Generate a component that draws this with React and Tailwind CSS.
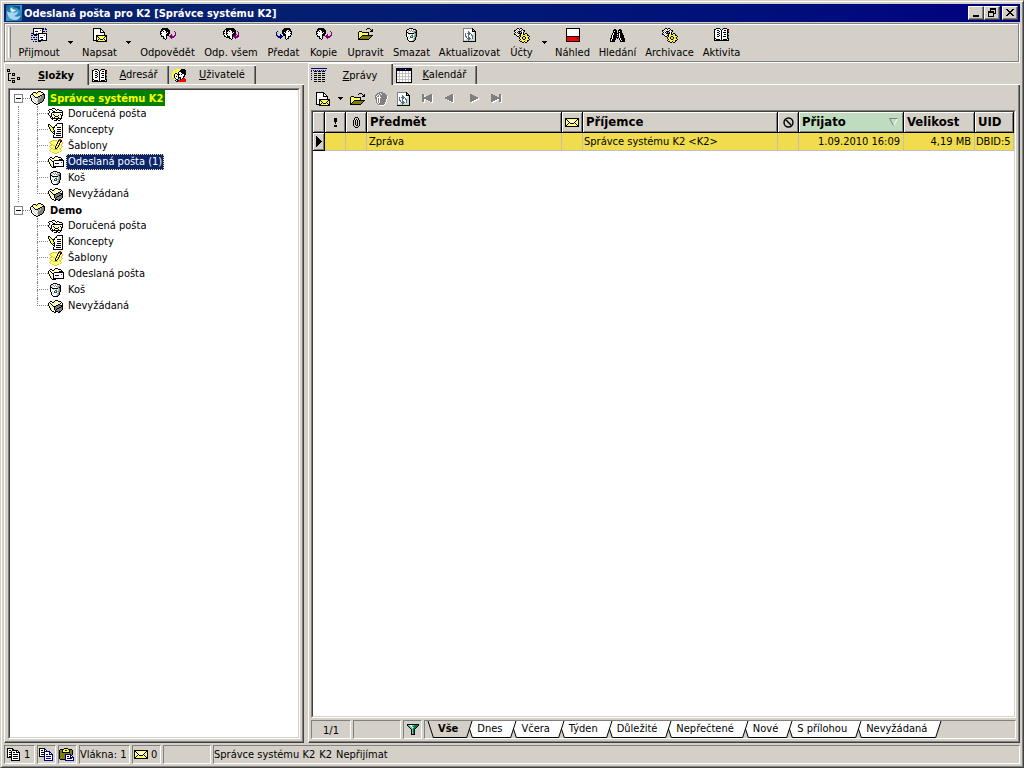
import { useState } from "react";

const palette = {
    K: "#000000",
    W: "#ffffff",
    Y: "#ffff30",
    o: "#dcc83c",
    y: "#808000",
    L: "#ffff7a",
    G: "#808080",
    g: "#c0c0c0",
    B: "#000080",
    P: "#800080",
    R: "#ff0000",
    E: "#008040",
    T: "#5fc4c4",
    A: "#5a6e8c",
    c: "#c4dcc8",
};

// 16x16 toolbar bitmaps, one character per pixel
const icons = {
    receive: [
        "..KKKKKKKKKKB.B.",
        "..KWWWWWWWWKB.BB",
        "..KWWWWWWRWK....",
        "..KWBBBWWWWKBB.B",
        "..KWWWWWWWWK....",
        "BBKWWBWKKKKKKKKK",
        "..KKKKKKWWWWWWWK",
        "BB.BBB.KWWWWWRWK",
        ".......KWWWWWWWK",
        "B.BB.B.KWBBBWWWK",
        ".......KWWWWWWWK",
        "BB.BBB.KWWBBWWWK",
        ".......KKKKKKKKK",
        "..B.BB.BBB......",
    ],
    compose: [
        ".KKKKKKKK.......",
        ".KWWWWWWKK......",
        ".KWWWWWWKWK.....",
        ".KWWWWWWKWWK....",
        ".KWWWWWWKKKKK...",
        ".KWWWWWWWWWWK...",
        ".KWWWWWWWWWWK...",
        ".KWWKKKKKKKKKKK.",
        ".KWWKKYLYLYLYKK.",
        ".KWWKYKYLYLYKYK.",
        ".KWWKLYKYLYKYLK.",
        ".KWWKYKYKKKYKYK.",
        ".KKKKKYLYLYLYKK.",
        "....KKKKKKKKKKK.",
    ],
    reply: [
        "..KKKKKK........",
        ".KKKKKKKK.......",
        ".KKWWKKKKK......",
        "KKWKWWKKKK....P.",
        "KWWWWWKWKK.....P",
        "KKWWWWWKKK.....P",
        "KWWWWWKKK..P...P",
        ".KWWWWKKK.PP..PP",
        ".KKKWWK..PPPPPP.",
        "...KWWK...PPPP..",
        "...KKWK....P....",
        ".....K..........",
    ],
    replyAll: [
        "...KKKKKKKK.....",
        "..KKKKKKKKKK....",
        ".KWKKKWWKKKKK...",
        "KKWKKWKWWKKKK.P.",
        "KWWKWWWWWKWKK..P",
        "KKWKKWWWWWKKK..P",
        "KWWKWWWWWKKKPP.P",
        ".KWWKWWWWKKPP.PP",
        ".KKWKKKWWKPPPPPP",
        "...KKKKWWK.PPPP.",
        "......KKWK..P...",
        "........K.......",
    ],
    forward: [
        "........KKKKKK..",
        ".......KKKKKKKK.",
        "......KKKKKWWKK.",
        ".N....KKKKWWKWKK",
        "N.....KKWKWWWWWK",
        "N.....KKKWWWWWKK",
        "N...N..KKKWWWWWK",
        "NN..NN.KKKWWWWK.",
        ".NNNNNN..KWWKKK.",
        "..NNNN...KWWK...",
        "....N....KWKK...",
        "..........K.....",
    ],
    open: [
        ".........KKK....",
        "........K...K.K.",
        ".............KK.",
        ".KKK........KKK.",
        "KYLYKKKKKKK.....",
        "KLYLYLYLYLK.....",
        "KYLYLYLYLYK.....",
        "KLYLKKKKKKKKKKK.",
        "KYLKyyyyyyyyyK..",
        "KLKyyyyyyyyyK...",
        "KKyyyyyyyyyK....",
        "KKKKKKKKKKK.....",
    ],
    trash: [
        ".....KKKK.......",
        "...KKWWgWKKK....",
        "..KgWGWGWgWGK...",
        "..KWgWGWGgGGK...",
        "..KKgWWWWgGKK...",
        "..KWKKKKKKgGK...",
        "..KWWgWWgWgGK...",
        "..KWWWWEEWgGK...",
        "..KWgWEWEgGGK...",
        "...KWWEEEWgK....",
        "...KWgWWWgGK....",
        "...KWWWWWgGK....",
        "....KWWWgGK.....",
        ".....KKKKK......",
    ],
    trashOff: [
        "......GGGG......",
        "....GGGWGGGG....",
        "...GGWGGWGGGG...",
        "..GGWGWGGGGGGG..",
        "..GWGGWGGGGGGGW.",
        "..GGWWWWGGGGGGW.",
        "..GGWGWGGGGGGGW.",
        "...GWGWGGGGGGW..",
        "...GWGWGGGGGGW..",
        "...GWGWGGGGGGW..",
        "...GWGWGGGGGW...",
        "....GWGGGGGGW...",
        ".....GGGGGGW....",
        "......WWWWW.....",
    ],
    refresh: [
        ".GGGGGGGGGK.....",
        ".GWWWWWWWWKK....",
        ".GWWWWWWWWKgK...",
        ".GWWWWAWWWKKKK..",
        ".GWWWWAAWWWWcK..",
        ".GWAWAAAAWWccK..",
        ".GWAWWAAWAWccK..",
        ".GWAWWAWWAAccK..",
        ".GWAAWAWWWAccK..",
        ".GWWAWAAWWAccK..",
        ".GWWWAAAAWAccK..",
        ".GWWccAAcccccK..",
        ".GccccAccccccK..",
        ".KKKKKKKKKKKKK..",
    ],
    gears: [
        "...KK.KK........",
        "..KWWKWWK.......",
        "KKWgWgWKWKK.....",
        "KWgWKKKgWgK.....",
        ".KWKgKgKWK......",
        "KWgWKKKKWK.KK...",
        "KKWgWgKYYKKYYK..",
        "..KWWKKYoYYoYKK.",
        "...KK.KYYKKYYYYK",
        ".....KYoK..KYoK.",
        ".....KYYK..KYYK.",
        "......KYYKKYYYYK",
        ".....KYoYYYoYKK.",
        "......KKYYKYYK..",
        "........KK.KK...",
    ],
    preview: [
        ".KKKKKKKKKKKKKK.",
        ".KWWWWWWWWWWWWK.",
        ".KWWWWWWWWWWWWK.",
        ".KWWWWWWWWWWWWK.",
        ".KWWWWWWWWWWWWK.",
        ".KWWWWWWWWWWWWK.",
        ".KWWWWWWWWWWWWK.",
        ".KWWWWWWWWWWWWK.",
        ".KKKKKKKKKKKKKK.",
        ".KRRRRRRRRRRRRK.",
        ".KRRRRRRRRRRKRK.",
        ".KRRRRRRRRRRRRK.",
        ".KRRRRRRRRRRRRK.",
        ".KKKKKKKKKKKKKK.",
    ],
    search: [
        "................",
        "....KK...KK.....",
        "...KKKK.KKKK....",
        "...KWKK.KWKK....",
        "...KKKK.KKKK....",
        "..KWKKKKKWKKK...",
        "..KWKKKWKWKKK...",
        ".KWKKKKKKWKKKK..",
        ".KWKKKKWKWKKKK..",
        ".KWKKKKKKWKKKK..",
        "KKWKKK.K.KWKKKK.",
        "KWKKKK...KWKKKK.",
        "KWKKK.....KWKKK.",
        "KKKKK.....KKKKK.",
    ],
    book: [
        "..KKKK...KKKK...",
        "KKWWWWK.KWWWWKK.",
        "KWWKKWWKWWKKWKR.",
        "KWWWWKWKWWWWWKR.",
        "KWWKKWWKWKKKWKK.",
        "KWWWWKWKWWWWWKT.",
        "KWWKKWWKWWKKWKT.",
        "KWWWWKWKWWWWWKK.",
        "KWWKKWWKWKKKWKG.",
        "KWWWWWWKWWWWWKG.",
        "KKWWWWWKWWWWWKK.",
        "KWKKKKWKWKKKKWK.",
        "KKKKKKKKKKKKKKK.",
    ],
    tree: [
        "KKK.............",
        "K.K.............",
        "KKK.............",
        "................",
        ".KKK.KKK........",
        ".K...K.K........",
        ".K...KKK........",
        ".K..............",
        ".K........KKK...",
        ".K..KKKK..K.K...",
        ".K........KKK...",
        ".KKK.KKK........",
        ".....K.K........",
        ".....KKK........",
    ],
    users: [
        "....YYYY.KKKK...",
        "..YYYYYYKKKKKK..",
        ".YYoYYYKKKKKKK..",
        ".YYYYYKWWKKKKK..",
        "YYYKKYKWWWKKKK..",
        "YYKWWKKKWKWWKK..",
        "YoKWWWKWWWWWK...",
        "YYKWKWKWWWWKK...",
        ".YKWWWKKKWWK....",
        ".oYKWWKTKWKRR...",
        "..YYKKTTKRRRRR..",
        "...KWKKRRRRRRR..",
        "....KKRRRRRRRR..",
    ],
    list: [
        "BBBBBBBBBBBBBBBB",
        "................",
        "B.B.B.B.B.B.B.B.",
        "B..KKK.KKK.KKK..",
        "................",
        "B..KKK.KKK.KKK..",
        "................",
        "B..KKK.KKK.KKK..",
        "................",
        "B..KKK.KKK.KKK..",
        "................",
        "B..KKK.KKK.KKK..",
        "................",
        "...KKK.KKK.KKK..",
        "................",
        "................",
    ],
    calendar: [
        "KKKKKKKKKKKKKKKK",
        "KBBBBBBBBgBBBBBK",
        "KKKKKKKKKKKKKKKK",
        "KWWgWWgWWgWWgWWK",
        "KWWgWWgWWgWWgWWK",
        "KggggggggggggggK",
        "KWWgWWgWWgWWgWWK",
        "KWWgWWgWWgWWgWWK",
        "KggggggggggggggK",
        "KWWgWWgWWgWWgWWK",
        "KWWgWWgWWgWWgWWK",
        "KggggggggggggggK",
        "KWWgWWgWWgWWgWWK",
        "KWWgWWgWWgWWgWWK",
        "KKKKKKKKKKKKKKKK",
    ],
    mailbox: [
        "........KKK.....",
        "...KKK.KLLLKK...",
        "..KLLLKLLWLLLK..",
        ".KKLWLLLWLWLKKK.",
        "KWWKLLWLWLKKgGK.",
        "KWgWKWLLKKgGGGK.",
        "KWWgWKKKgGgGGGK.",
        ".KWWgWWgGgGGGGK.",
        ".KWgWWgWGGGGGK..",
        ".KWWgWWgGGGGGK..",
        "..KWWgWgGGGGK...",
        "...KWWgWGGKK....",
        "....KKWgKK......",
        "......KK........",
    ],
    inbox: [
        "....KKK.........",
        ".KKKWWWK.KK.....",
        "K.WWKWWWKWWKKK..",
        ".KWWWKKWWWWWWWK.",
        ".KWWKKKKKKKKKKK.",
        "KWWKWWWWWWWWWWK.",
        "K.WKWKWLLLLWKWK.",
        ".KWKWWKLLLKWWKK.",
        "..KKWLWKKKWLWK..",
        "..KWKLKWWWKLWK..",
        "...KKKKKKKKKKK..",
        "....KWWWKKWWK...",
        "......KKK.KK....",
    ],
    drafts: [
        ".........KKKKKK.",
        "KK......KWWWWWK.",
        "KYK....KKWWWWWK.",
        "KYYK..KWWWWWWWK.",
        ".KYYKKKWWKKKKWK.",
        ".KYYYKWWWWWWWWK.",
        "..KYYKWWWKKKKWK.",
        "..KYYYKWWWWWWWK.",
        "...KYKKWWKKKKWK.",
        "....KWKWWWWWWWK.",
        ".....KKWKKKKKWK.",
        "......KWWWWWWWK.",
        ".....KWWKKKKKWK.",
        ".....KWWWWWWWWK.",
        ".....KKKKKKKKKK.",
    ],
    templates: [
        "...........RR...",
        "....ooooo.KRRK..",
        "..ooLLLLLoKYKK..",
        ".oLLLLLLLKYYKLo.",
        "..oLLLLLLKYKLLo.",
        "...ooLLLKYYKLo..",
        "..ooLooLKYKoLo..",
        ".oLLLLLKYYKLLLo.",
        "..oLLLLKYKLLLo..",
        "...ooLLKKLLoo...",
        "..oLLoooooLLo...",
        ".oLLLLLLLLLLLo..",
        "..oLLLLLLLLLo...",
        "....ooLLLoo.....",
        "......ooo.......",
    ],
    sent: [
        ".......KKK......",
        "..KK..KWLWKKK...",
        ".KWLKKWLWLWWWK..",
        "K.KWLWLWLWWKKKK.",
        "KLWKLWKKKKKKKKKK",
        "KWLWKKWWWWWWWWWK",
        ".KWLWKWWWWWWWRWK",
        ".KLWLKWBBBBWWWWK",
        "..KWLKWWWWWWWWWK",
        "..KLWKWWWWWWWWWK",
        "...KWKKKKKKKKKKK",
        "....KKKK........",
    ],
    spam: [
        ".......KKK......",
        "..KK..KWLWKKK...",
        ".KWLKKWLWLWLWK..",
        "K.KWLWLWLWLWKWK.",
        "KLWKLWLWLWKKLWK.",
        "KWLWKLWLKKGGKKK.",
        ".KWLWKKKGGGGGKK.",
        ".KLWLWKGGGGKKGK.",
        "..KWLWKGGKKGGGK.",
        "..KLWLKGKGGGGGK.",
        "...KWLWKGGGGGK..",
        "....KKWKKKGKK...",
        "......KK..KK....",
    ],
    envelope: [
        "KKKKKKKKKKKKKK",
        "KKLLLLLLLLLLKK",
        "KLKWLWLWLWLKLK",
        "KLLKWLWLWLKLLK",
        "KLLWKWLWLKWLLK",
        "KLLKLKKKKLKLLK",
        "KLKLLLLLLLLKLK",
        "KKLLLLLLLLLLKK",
        "KKKKKKKKKKKKKK",
    ],
    clip: [
        "...KKK..",
        "..K...K.",
        "..K.K.K.",
        ".K.K.K.K",
        ".K.K.K.K",
        ".K.K.K.K",
        ".K.K.K.K",
        ".K.K.K.K",
        ".K..KK.K",
        "..K...K.",
        "...KKK..",
    ],
    pages: [
        "KKKKKK..........",
        "KWWWWKK.........",
        "KWKKWKKKKKK.....",
        "KWWWKWWWWKWK....",
        "KWKKKWKKWKKKK...",
        "KWWWKWWWWWWWK...",
        "KWKKKWKKKKKWK...",
        "KWWWKWWWWWWWK...",
        "KWKKKWKKKKKWK...",
        "KKKKKWWWWWWWK...",
        "....KWKKKKKWK...",
        "....KWWWWWWWK...",
        "....KKKKKKKKK...",
    ],
    copy: [
        "KKKKKK..........",
        "KWWWWKK.........",
        "KWKKWKWK........",
        "KWWWWBBBBBB.....",
        "KWKKKBWWWWBB....",
        "KWWWWBWWWWBWB...",
        "KWKKKBWBBWBBBB..",
        "KWWWWBWWWWWWWB..",
        "KKKKKBWBBBBBWB..",
        ".....BWWWWWWWB..",
        ".....BWBBBBBWB..",
        ".....BWWWWWWWB..",
        ".....BBBBBBBBB..",
    ],
    paste: [
        ".....KKKK.......",
        ".KKKKYYYYKKKK...",
        "KyyKYYKKYYKyyK..",
        "KyyKLLLLLLKyyK..",
        "KyyKKKKKKKKyyK..",
        "KyyyyyyyyyyyyK..",
        "KyyyyyBBBBBByK..",
        "KyyyyyBWWWWBB...",
        "KyyyyyBWBBWBWB..",
        "KyyyyyBWWWWBBBB.",
        "KyyyyyBWBBBBBWB.",
        ".KKKKKBWWWWWWWB.",
        "......BBBBBBBBB.",
    ],
    filter: [
        "KKKKKKKKKKKK",
        "KTTWWTTEEEEK",
        ".KTTWTEEEEK.",
        "..KTTWTEEK..",
        "...KTTEEK...",
        "....KTEK....",
        "....KTEK....",
        "....KTEK....",
        "....KTEK....",
        "....KTEK....",
        "....KKKK....",
    ],
};

function Icon({ name, className = "" }) {
    const rows = icons[name];
    const width = rows[0].length;
    const colors = { ...palette, N: "#000080" };

    return (
        <svg
            width={width}
            height={rows.length}
            viewBox={`0 0 ${width} ${rows.length}`}
            shapeRendering="crispEdges"
            className={`shrink-0 ${className}`}
            aria-hidden="true"
        >
            {rows.map((row, y) =>
                [...row].map((c, x) =>
                    colors[c] ? (
                        <rect
                            key={`${x}-${y}`}
                            x={x}
                            y={y}
                            width="1"
                            height="1"
                            fill={colors[c]}
                        />
                    ) : null
                )
            )}
        </svg>
    );
}

function DropArrow() {
    return (
        <svg width="5" height="3" viewBox="0 0 5 3" shapeRendering="crispEdges" aria-hidden="true">
            <path d="M0 0h5v1H0zM1 1h3v1H1zM2 2h1v1H2z" />
        </svg>
    );
}

function Logo() {
    return (
        <svg width="16" height="16" viewBox="0 0 16 16" className="shrink-0" aria-hidden="true">
            <defs>
                <linearGradient id="logo" x1="0" y1="0" x2="1" y2="1">
                    <stop offset="0" stopColor="#0a5c96" />
                    <stop offset="0.5" stopColor="#3c9ccc" />
                    <stop offset="1" stopColor="#0f5f9a" />
                </linearGradient>
            </defs>
            <rect width="16" height="16" fill="url(#logo)" />
            <path d="M1 6c0 5 3 9 8 9 3 0 5-2 6-5-2 2-5 2-7 1 3-1 4-3 4-5-2 2-4 2-6 1C3 8 2 7 1 6z" fill="#a9d6ee" />
            <path d="M5 2c-1 2-1 4 1 5 2 0 3-1 4-2-2 0-4-1-5-3z" fill="#e8f6fd" />
            <path d="M7 1h7v4c-1 0-2-1-3-2-1 0-3-1-4-2z" fill="#0b4f86" />
        </svg>
    );
}

const toolbar = [
    { label: "Přijmout", icon: "receive", width: "w-[50px]", menu: true },
    { label: "Napsat", icon: "compose", width: "w-[45px]", menu: true },
    { label: "Odpovědět", icon: "reply", width: "w-[65px]" },
    { label: "Odp. všem", icon: "replyAll", width: "w-[62px]" },
    { label: "Předat", icon: "forward", width: "w-[43px]" },
    { label: "Kopie", icon: "reply", width: "w-[37px]" },
    { label: "Upravit", icon: "open", width: "w-[47px]" },
    { label: "Smazat", icon: "trash", width: "w-[45px]" },
    { label: "Aktualizovat", icon: "refresh", width: "w-[71px]" },
    { label: "Účty", icon: "gears", width: "w-[33px]", menu: true },
    { label: "Náhled", icon: "preview", width: "w-[43px]" },
    { label: "Hledání", icon: "search", width: "w-[47px]" },
    { label: "Archivace", icon: "gears", width: "w-[57px]" },
    { label: "Aktivita", icon: "book", width: "w-[47px]" },
];

const folders = [
    { label: "Doručená pošta", icon: "inbox" },
    { label: "Koncepty", icon: "drafts" },
    { label: "Šablony", icon: "templates" },
    { label: "Odeslaná pošta", icon: "sent", unread: 1 },
    { label: "Koš", icon: "trash" },
    { label: "Nevyžádaná", icon: "spam" },
];

const filters = [
    "Vše",
    "Dnes",
    "Včera",
    "Týden",
    "Důležité",
    "Nepřečtené",
    "Nové",
    "S přílohou",
    "Nevyžádaná",
];

function TitleBar() {
    const button =
        "flex h-[14px] w-4 items-center justify-center border border-t-white border-l-white border-r-[#404040] border-b-[#404040] bg-[#d4d0c8] shadow-[inset_-1px_-1px_#808080]";

    return (
        <header className="flex h-[18px] items-center bg-linear-to-r from-[#0a246a] to-[#000080] px-[2px] text-white">
            <Logo />
            <h1 className="ml-[2px] flex-1 pt-px font-bold">
                Odeslaná pošta pro K2 [Správce systému K2]
            </h1>
            <button type="button" aria-label="Minimalizovat" className={button}>
                <svg width="10" height="10" viewBox="0 0 10 10" shapeRendering="crispEdges">
                    <path d="M2 7h6v2H2z" />
                </svg>
            </button>
            <button type="button" aria-label="Obnovit" className={button}>
                <svg width="10" height="10" viewBox="0 0 10 10" shapeRendering="crispEdges">
                    <path d="M3 0h6v6H7V5h1V2H4v1H3zM1 3h6v6H1zM2 5v3h4V5z" fillRule="evenodd" />
                </svg>
            </button>
            <button type="button" aria-label="Zavřít" className={`ml-[2px] ${button}`}>
                <svg width="10" height="10" viewBox="0 0 10 10" shapeRendering="crispEdges">
                    <path d="M1 1h2v1h1v1h2V2h1V1h2v1H8v1H7v1H6v1h1v1h1v1h1v1H7V7H6V6H4v1H3v1H1V7h1V6h1V5h1V4H3V3H2V2H1z" />
                </svg>
            </button>
        </header>
    );
}

function Toolbar() {
    return (
        <div className="mt-px mr-px mb-px flex h-[39px] border border-[#808080] pl-[3px] shadow-[inset_1px_1px_#fff,1px_1px_#fff]">
            <div className="my-[3px] mr-[3px] w-[3px] border-r border-l border-r-[#808080] border-l-white" />
            {toolbar.map((item) => (
                <div key={item.label} className="flex">
                    <button
                        type="button"
                        className={`flex flex-col items-center pt-1 ${item.width}`}
                    >
                        <span className="flex h-[17px] items-start">
                            <Icon name={item.icon} />
                        </span>
                        <span className="leading-4 whitespace-nowrap">{item.label}</span>
                    </button>
                    {item.menu && (
                        <button
                            type="button"
                            aria-label={`${item.label} – nabídka`}
                            className="flex w-[13px] items-center justify-center"
                        >
                            <DropArrow />
                        </button>
                    )}
                </div>
            ))}
        </div>
    );
}

function Tab({ label, icon, active, bold, width }) {
    return (
        <button
            type="button"
            role="tab"
            aria-selected={Boolean(active)}
            className={`flex items-center border-t border-l border-white pl-[2px] shadow-[inset_-1px_0_#404040,inset_-2px_0_#808080] ${width} ${
                active ? "h-[22px] pt-[2px]" : "h-5 border-b border-l-transparent"
            }`}
        >
            <Icon name={icon} />
            <span className={`flex-1 text-center ${bold ? "font-bold" : ""}`}>
                <u>{label[0]}</u>
                {label.slice(1)}
            </span>
        </button>
    );
}

function TreeRoot({ label, highlighted, first }) {
    const line = "border-dotted border-[#808080]";

    return (
        <li>
            <div className="flex h-4 items-center">
                <button
                    type="button"
                    aria-label="Sbalit"
                    className="ml-1 flex size-[9px] items-center justify-center border border-[#808080] bg-white"
                >
                    <span className="h-px w-[5px] bg-black" />
                </button>
                <span className={`w-[7px] border-t ${line}`} />
                <Icon name="mailbox" />
                <button
                    type="button"
                    className={`ml-[2px] h-4 px-[2px] pt-px leading-[15px] font-bold ${
                        highlighted ? "bg-[#008000] text-[#ffff00]" : ""
                    }`}
                >
                    {label}
                </button>
            </div>
            <ul>
                {folders.map((folder, i) => {
                    const selected = first && folder.unread;
                    return (
                        <li key={folder.label} className="flex h-4 items-center">
                            <span
                                className={`ml-2 h-4 w-[19px] ${
                                    first ? `border-l ${line}` : ""
                                }`}
                            />
                            <span className="flex h-4 w-[11px] flex-col">
                                <span className={`h-2 border-b border-l ${line}`} />
                                {i < folders.length - 1 && (
                                    <span className={`h-2 border-l ${line}`} />
                                )}
                            </span>
                            <Icon name={folder.icon} />
                            <button
                                type="button"
                                className={`ml-[2px] h-4 border px-px leading-[14px] ${
                                    selected
                                        ? "border-dotted border-[#f5db95] bg-[#0a246a] text-white"
                                        : "border-transparent"
                                }`}
                            >
                                {folder.label}
                                {selected ? ` (${folder.unread})` : ""}
                            </button>
                        </li>
                    );
                })}
            </ul>
        </li>
    );
}

function FolderPane() {
    return (
        <section className="flex w-[300px] shrink-0 flex-col">
            <div role="tablist" className="flex h-[22px] items-end">
                <Tab label="Složky" icon="tree" active bold width="w-[85px]" />
                <Tab label="Adresář" icon="book" width="w-20" />
                <Tab label="Uživatelé" icon="users" width="w-[87px]" />
                <span className="flex-1 border-b border-white" />
            </div>
            <div className="flex flex-1 border-r border-b border-l border-r-[#404040] border-b-[#404040] border-l-white p-[3px] shadow-[inset_-1px_-1px_#808080]">
                <div className="flex flex-1 border border-t-[#808080] border-r-white border-b-white border-l-[#808080] bg-white">
                    <ul className="flex-1 border border-t-[#404040] border-r-[#d4d0c8] border-b-[#d4d0c8] border-l-[#404040]">
                        <TreeRoot label="Správce systému K2" highlighted first />
                        <TreeRoot label="Demo" />
                    </ul>
                </div>
            </div>
        </section>
    );
}

function NavButton({ label, path }) {
    return (
        <button type="button" aria-label={label} className="flex w-[23px] justify-center">
            <svg width="12" height="10" viewBox="0 0 12 10" shapeRendering="crispEdges">
                <path d={path} transform="translate(1 1)" fill="#fff" />
                <path d={path} fill="#808080" />
            </svg>
        </button>
    );
}

function MessageTable() {
    const head =
        "border-r border-b border-black p-0 text-left align-middle shadow-[inset_1px_1px_#fff,inset_-1px_-1px_#808080]";
    const cell = "border-r border-b border-[#c0c0c0] bg-[#f0dc4c] p-0 pt-px";

    return (
        <table className="w-full table-fixed border-separate border-spacing-0 overflow-hidden whitespace-nowrap">
            <colgroup>
                <col className="w-3" />
                <col className="w-[21px]" />
                <col className="w-[21px]" />
                <col className="w-[195px]" />
                <col className="w-[21px]" />
                <col className="w-[195px]" />
                <col className="w-[21px]" />
                <col className="w-[105px]" />
                <col className="w-[71px]" />
                <col />
            </colgroup>
            <thead className="bg-[#d4d0c8] text-[13px] leading-4">
                <tr className="h-[21px]">
                    <th className={head} aria-label="Ukazatel" />
                    <th className={head} aria-label="Důležitost">
                        <svg width="3" height="9" viewBox="0 0 3 9" className="mx-auto" shapeRendering="crispEdges">
                            <path d="M0 0h3v4H2v2H1V4H0zM0 7h3v2H0z" />
                        </svg>
                    </th>
                    <th className={head} aria-label="Příloha">
                        <Icon name="clip" className="mx-auto" />
                    </th>
                    <th className={`${head} pl-[3px]`}>Předmět</th>
                    <th className={head} aria-label="Stav">
                        <Icon name="envelope" className="mx-auto" />
                    </th>
                    <th className={`${head} pl-[3px]`}>Příjemce</th>
                    <th className={head} aria-label="Blokováno">
                        <svg width="11" height="11" viewBox="0 0 11 11" className="mx-auto" fill="none" stroke="#000" strokeWidth="1.4">
                            <circle cx="5.5" cy="5.5" r="4.5" />
                            <path d="M2.5 2.5l6 6" />
                        </svg>
                    </th>
                    <th className={`${head} bg-[#c0dcc0] px-[3px]`}>
                        <span className="flex items-center justify-between">
                            Přijato
                            <svg width="9" height="8" viewBox="0 0 9 8" className="mr-[2px]" fill="none">
                                <path d="M8.500 0.500L4.500 7.500" stroke="#fff" />
                                <path d="M8.500 0.500H0.500L4.500 7.500" stroke="#808080" />
                            </svg>
                        </span>
                    </th>
                    <th className={`${head} pl-[3px]`}>Velikost</th>
                    <th className={`${head} pl-[3px]`}>UID</th>
                </tr>
            </thead>
            <tbody>
                <tr className="h-[18px]">
                    <td className="border-r border-b border-black bg-[#d4d0c8] p-0 shadow-[inset_1px_1px_#fff,inset_-1px_-1px_#808080]">
                        <svg width="6" height="11" viewBox="0 0 6 11" className="ml-[3px]" shapeRendering="crispEdges">
                            <path d="M0 0l6 5.500L0 11z" />
                        </svg>
                    </td>
                    <td className={cell} />
                    <td className={cell} />
                    <td className={`${cell} pl-[2px]`}>Zpráva</td>
                    <td className={cell} />
                    <td className={`${cell} pl-px`}>Správce systému K2 &lt;K2&gt;</td>
                    <td className={cell} />
                    <td className={`${cell} pr-[3px] text-right`}>1.09.2010 16:09</td>
                    <td className={`${cell} pr-[3px] text-right`}>4,19 MB</td>
                    <td className={`${cell} overflow-hidden pl-px`}>DBID:5</td>
                </tr>
            </tbody>
        </table>
    );
}

// Slanted edge shared by two neighbouring sheet tabs
function Slant({ left, right }) {
    return (
        <svg width="7" height="17" viewBox="0 0 7 17" className="shrink-0" aria-hidden="true">
            {left === "white" && <path d="M0 0H6L0.500 17H0z" fill="#fff" />}
            {right && <path d="M6 0H7V17L3 8z" fill="#fff" />}
            {left && <path d="M6 0L0.500 17" stroke="#000" />}
            {right && <path d="M3.500 8L6.500 17" stroke="#000" />}
        </svg>
    );
}

function FilterTabs() {
    const [active, setActive] = useState("Vše");

    return (
        <div role="tablist" className="flex flex-1 overflow-hidden border border-t-[#808080] border-r-white border-b-white border-l-[#808080] pl-[2px]">
            <svg width="7" height="17" viewBox="0 0 7 17" className="shrink-0" aria-hidden="true">
                <path d="M1 0L6.500 17" stroke="#000" />
            </svg>
            {filters.map((name, i) => (
                <div key={name} className="flex h-[17px]">
                    <button
                        type="button"
                        role="tab"
                        aria-selected={name === active}
                        onClick={() => setActive(name)}
                        className={`h-[17px] border-b border-black pr-2 pl-1 leading-4 ${
                            name === active ? "font-bold" : "bg-white"
                        }`}
                    >
                        {name}
                    </button>
                    <Slant
                        left={name === active ? "face" : "white"}
                        right={i < filters.length - 1}
                    />
                </div>
            ))}
        </div>
    );
}

function MessagePane() {
    const sunken = "border border-t-[#808080] border-l-[#808080] border-r-white border-b-white";

    return (
        <section className="flex min-w-0 flex-1 flex-col">
            <div role="tablist" className="flex h-[22px] items-end">
                <Tab label="Zprávy" icon="list" active width="w-[85px]" />
                <Tab label="Kalendář" icon="calendar" width="w-[84px]" />
                <span className="flex-1 border-b border-white" />
            </div>
            <div className="flex flex-1 flex-col border-r border-b border-l border-r-[#404040] border-b-[#404040] border-l-white pr-[3px] pb-[3px] pl-[2px] shadow-[inset_-1px_-1px_#808080]">
                <div className="flex h-[25px] items-center pt-[2px] pl-1">
                    <button type="button" aria-label="Nová zpráva">
                        <Icon name="compose" />
                    </button>
                    <button type="button" aria-label="Typ zprávy" className="mr-[7px] ml-[7px]">
                        <DropArrow />
                    </button>
                    <button type="button" aria-label="Otevřít">
                        <Icon name="open" />
                    </button>
                    <button type="button" aria-label="Odstranit" className="ml-[7px]">
                        <Icon name="trashOff" />
                    </button>
                    <button type="button" aria-label="Obnovit seznam" className="mr-1 ml-[7px]">
                        <Icon name="refresh" />
                    </button>
                    <NavButton label="První" path="M0 0h2v8H0zM2 3h2V2h2V1h2V0h2v8H8V7H6V6H4V5H2z" />
                    <NavButton label="Předchozí" path="M0 3h2V2h2V1h2V0h2v8H6V7H4V6H2V5H0z" />
                    <NavButton label="Další" path="M2 0h2v1h2v1h2v1h2v2H8v1H6v1H4v1H2z" />
                    <NavButton label="Poslední" path="M0 0h2v1h2v1h2v1h2V0h2v8H8V5H6v1H4v1H2v1H0z" />
                </div>
                <div className={`flex flex-1 bg-white ${sunken}`}>
                    <div className="min-w-0 flex-1 border border-t-[#404040] border-r-[#d4d0c8] border-b-[#d4d0c8] border-l-[#404040]">
                        <MessageTable />
                    </div>
                </div>
                <div className="mt-[2px] flex h-[19px] gap-[2px]">
                    <span className={`w-10 text-center leading-[19px] ${sunken}`}>1/1</span>
                    <span className={`w-12 ${sunken}`} />
                    <button
                        type="button"
                        aria-label="Filtr"
                        className={`flex w-[19px] items-center justify-center ${sunken}`}
                    >
                        <Icon name="filter" />
                    </button>
                    <FilterTabs />
                </div>
            </div>
        </section>
    );
}

function StatusBar() {
    const cell =
        "flex items-center whitespace-nowrap border border-t-[#808080] border-l-[#808080] border-r-white border-b-white";

    return (
        <footer className="mt-[2px] flex h-[19px] gap-[2px]">
            <span className={`w-[31px] gap-px pl-[2px] ${cell}`}>
                <Icon name="pages" />1
            </span>
            <span className={`w-[19px] pl-px ${cell}`}>
                <Icon name="copy" />
            </span>
            <span className={`w-[19px] ${cell}`}>
                <Icon name="paste" />
            </span>
            <span className={`w-[51px] ${cell}`}>Vlákna: 1</span>
            <span className={`w-[29px] gap-[3px] pl-px ${cell}`}>
                <Icon name="envelope" />0
            </span>
            <span className={`w-12 ${cell}`} />
            <span className={`flex-1 gap-1 ${cell}`}>
                <span>Správce systému K2</span>
                <span>K2</span>
                <span>Nepřijímat</span>
            </span>
        </footer>
    );
}

export default function App() {
    return (
        <div className="flex min-h-screen flex-col border border-t-[#d4d0c8] border-r-[#404040] border-b-[#404040] border-l-[#d4d0c8] bg-[#d4d0c8] p-[3px] font-['DejaVu_Sans_Condensed','DejaVu_Sans',sans-serif] text-[11px] leading-[14px] text-black shadow-[inset_1px_1px_#fff,inset_-1px_-1px_#808080]">
            <TitleBar />
            <Toolbar />
            <main className="flex flex-1 gap-1">
                <FolderPane />
                <MessagePane />
            </main>
            <StatusBar />
        </div>
    );
}
